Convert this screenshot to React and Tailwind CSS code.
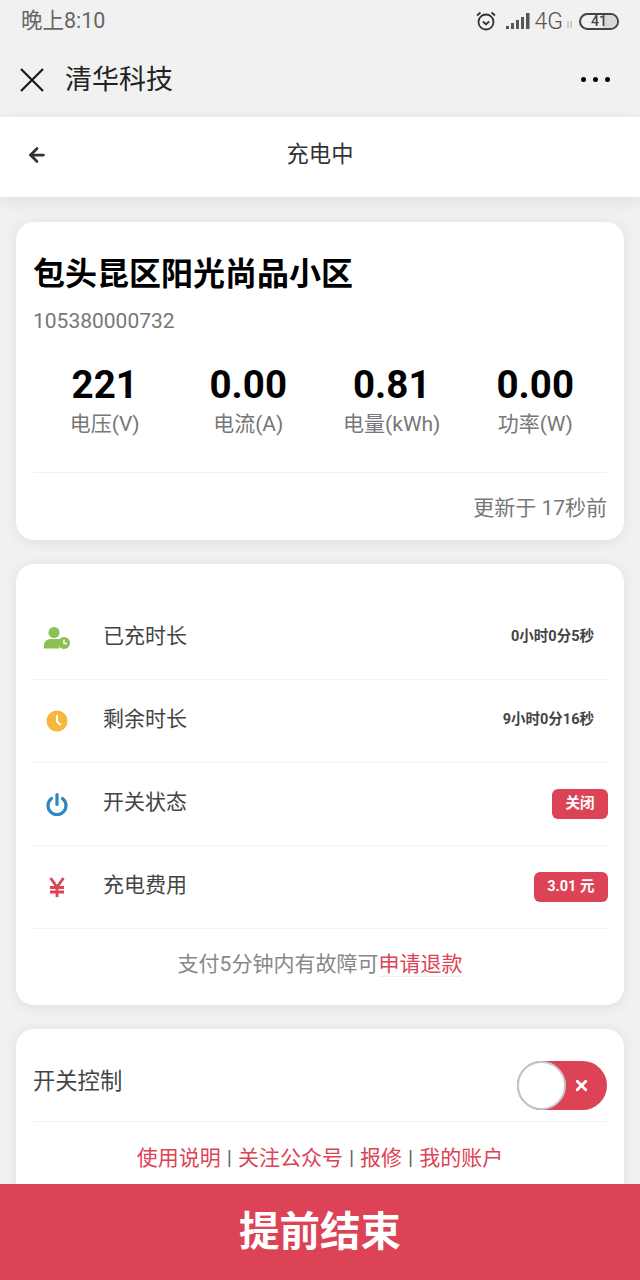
import React from 'react';
import { ArrowLeft, X } from 'lucide-react';

const font = { fontFamily: 'Roboto, "Noto Sans CJK SC", sans-serif' };

const stats = [
  { value: '221', label: '电压(V)' },
  { value: '0.00', label: '电流(A)' },
  { value: '0.81', label: '电量(kWh)' },
  { value: '0.00', label: '功率(W)' },
];

const UserClock = () => (
  <svg width="28" height="24" viewBox="0 0 28 24">
    <circle cx="11" cy="6.500" r="5.500" fill="#8bc152" />
    <path d="M1 22.500v-3c0-4 3-6.500 7-6.500h6c2 0 3 .5 4 1.500a7 7 0 0 0-1.500 8z" fill="#8bc152" />
    <circle cx="21" cy="17" r="6" fill="#8bc152" />
    <path d="M21 13.500V17.500h3" fill="none" stroke="#fff" strokeWidth="1.300" />
  </svg>
);

const ClockIcon = () => (
  <svg width="22" height="22" viewBox="0 0 22 22">
    <circle cx="11" cy="11" r="10.500" fill="#f6b73c" />
    <path d="M10 5h2v6l3.500 3.500-1.400 1.400L10 12z" fill="#fff" />
  </svg>
);

const PowerIcon = () => (
  <svg width="22" height="24" viewBox="0 0 22 24" fill="none" stroke="#2d86bd" strokeWidth="3.200" strokeLinecap="round">
    <path d="M11 2.500v10" />
    <path d="M5.500 6.500a9 9 0 1 0 11 0" />
  </svg>
);

const YenIcon = () => (
  <svg width="16" height="20" viewBox="0 0 16 20" fill="none" stroke="#dc4356" strokeWidth="2.800">
    <path d="M1.500 1l6.500 9 6.500-9" />
    <path d="M8 9v11M1 10.500h14M1 15h14" />
  </svg>
);

const rows = [
  { icon: <UserClock />, label: '已充时长', value: '0小时0分5秒' },
  { icon: <ClockIcon />, label: '剩余时长', value: '9小时0分16秒' },
  { icon: <PowerIcon />, label: '开关状态', badge: '关闭' },
  { icon: <YenIcon />, label: '充电费用', badge: '3.01 元' },
];

const StatusBar = () => (
  <div className="h-[42px] flex items-center justify-between pl-[21px] pr-[21px] text-[#555]">
    <span className="text-[21.5px] font-normal text-[#666]">晚上8:10</span>
    <div className="flex items-center">
      <svg width="22" height="22" viewBox="0 0 22 22" fill="none" stroke="#333" strokeWidth="1.800">
        <circle cx="11" cy="12" r="7.500" />
        <path d="M7.800 11.500l3.200 2.800 3.200-2.800M2 5.500l3.500-3M20 5.500l-3.500-3" />
      </svg>
      <svg className="ml-[9px]" width="24" height="18" viewBox="0 0 24 18" fill="#555">
        <rect x="0" y="14" width="3" height="3" />
        <rect x="5" y="11" width="3" height="6" />
        <rect x="10" y="8" width="3" height="9" />
        <rect x="15" y="5" width="3" height="12" />
        <rect x="20" y="1" width="3.500" height="16" />
      </svg>
      <span className="ml-[5px] text-[23px] font-light leading-none">4G</span>
      <svg className="ml-[3px] mt-[6px]" width="7" height="9" viewBox="0 0 7 9" fill="none" stroke="#aaa" strokeWidth="1">
        <path d="M2 1v7M5 1v7" />
      </svg>
      <div className="relative ml-[6px] w-[40px] h-[17px] rounded-full border-2 border-[#444] overflow-hidden flex items-center justify-center">
        <div className="absolute right-0 top-0 bottom-0 w-[14px] bg-[#d8d8d8]" />
        <span className="relative text-[14px] font-medium text-[#444]">41</span>
      </div>
    </div>
  </div>
);

const TitleBar = () => (
  <div className="h-[75px] flex items-center justify-between pl-[20px] pr-[30px]">
    <div className="flex items-center gap-[21px]">
      <svg width="24" height="24" viewBox="0 0 24 24" stroke="#1a1a1a" strokeWidth="2.200">
        <path d="M1 1l22 22M23 1L1 23" />
      </svg>
      <span className="text-[27px] text-[#222] mt-[2px]">清华科技</span>
    </div>
    <div className="flex gap-[7px]">
      <span className="w-[5px] h-[5px] rounded-full bg-black" />
      <span className="w-[5px] h-[5px] rounded-full bg-black" />
      <span className="w-[5px] h-[5px] rounded-full bg-black" />
    </div>
  </div>
);

const App = () => (
  <div className="relative w-[640px] h-[1280px] overflow-hidden bg-[#f1f1f1]" style={font}>
    <StatusBar />
    <TitleBar />
    <div className="h-[80px] pb-[4px] bg-white flex items-center justify-center relative shadow-[0_4px_16px_rgba(0,0,0,0.08)]">
      <ArrowLeft size={22} strokeWidth={3} color="#333" className="absolute left-[26px]" />
      <span className="text-[22.3px] text-[#333]">充电中</span>
    </div>

    <div className="flex flex-col gap-[24px] px-[16px] pt-[25px]">
      <section className="h-[318px] bg-white rounded-[18px] px-[17px] shadow-[0_2px_14px_rgba(0,0,0,0.08)]">
        <h1 className="text-[32px] font-bold text-black pt-[29px] leading-[46px]">包头昆区阳光尚品小区</h1>
        <p className="text-[21px] text-[#777] leading-[26px] mt-[11px]">105380000732</p>
        <div className="grid grid-cols-4 mt-[28px] h-[111px] border-b border-[#f1f1f1]">
          {stats.map((s) => (
            <div key={s.label} className="flex flex-col items-center">
              <span className="text-[38.5px] font-bold text-black leading-[46px]">{s.value}</span>
              <span className="text-[21px] text-[#777] leading-[24px] mt-[4px]">{s.label}</span>
            </div>
          ))}
        </div>
        <p className="text-[21px] text-[#777] text-right leading-[26px] mt-[22px]">更新于 17秒前</p>
      </section>

      <section className="h-[441px] bg-white rounded-[18px] px-[16px] pt-[33px] shadow-[0_2px_14px_rgba(0,0,0,0.08)]">
        {rows.map((r) => (
          <div key={r.label} className="h-[83px] flex items-center border-b border-[#f3f3f3]">
            <div className="w-[50px] flex justify-center">{r.icon}</div>
            <span className="ml-[21px] text-[21px] text-[#444] -mt-[3px]">{r.label}</span>
            <div className="ml-auto">
              {r.value && <span className="block pr-[14px] pb-[2px] text-[14.500px] font-bold text-[#444]">{r.value}</span>}
              {r.badge && (
                <span className="flex items-center justify-center h-[30px] px-[13.500px] rounded-[6px] bg-[#dc4356] text-[14.500px] font-bold text-white">
                  {r.badge}
                </span>
              )}
            </div>
          </div>
        ))}
        <p className="text-center text-[21px] text-[#888] mt-[20px] leading-[30px]">
          支付5分钟内有故障可<span className="text-[#dc4356] border-b border-[#eee]">申请退款</span>
        </p>
      </section>

      <section className="h-[260px] bg-white rounded-[18px] px-[17px] shadow-[0_2px_14px_rgba(0,0,0,0.08)]">
        <div className="h-[93px] flex items-start justify-between border-b border-[#f1f1f1]">
          <span className="text-[22.300px] text-[#444] mt-[37px] leading-[30px]">开关控制</span>
          <div className="relative w-[90px] h-[49px] rounded-full bg-[#dc4356] flex items-center justify-end pr-[17px] mt-[32px]">
            <span className="absolute left-0 top-0 w-[49px] h-[49px] rounded-full bg-white border-2 border-[#c8c8c8]" />
            <X size={17} strokeWidth={4} color="#fff" />
          </div>
        </div>
        <p className="flex justify-center gap-[6px] text-[21px] text-[#dc4356] mt-[21px] leading-[30px]">
          <span>使用说明</span><span className="text-[#666]">|</span><span>关注公众号</span><span className="text-[#666]">|</span><span>报修</span><span className="text-[#666]">|</span><span>我的账户</span>
        </p>
      </section>
    </div>

    <div className="absolute left-0 right-0 bottom-0 h-[96px] bg-[#dc4356] flex items-center justify-center">
      <span className="text-[40.500px] font-bold text-white">提前结束</span>
    </div>
  </div>
);

export default App;
